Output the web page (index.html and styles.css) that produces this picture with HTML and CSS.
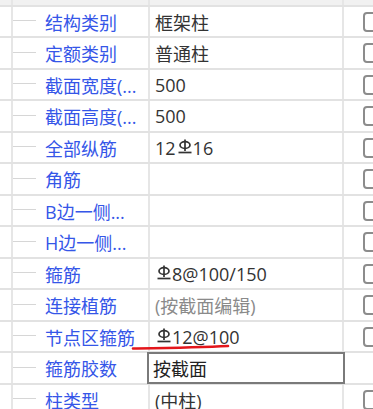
FILE: index.html
```html
<!DOCTYPE html>
<html>
<head>
<meta charset="utf-8">
<link rel="stylesheet" href="styles.css">
</head>
<body>
<div class="grid">
  <div class="strip"><div></div><div class="c1"></div><div class="c2"></div><div class="c3"></div></div>
  <div class="row odd"><div></div><div class="c1"><span class="branch"></span><span class="label">结构类别</span></div><div class="c2">框架柱</div><div class="c3"><span class="cb"></span></div></div>
  <div class="row even"><div></div><div class="c1"><span class="branch"></span><span class="label">定额类别</span></div><div class="c2">普通柱</div><div class="c3"><span class="cb"></span></div></div>
  <div class="row odd"><div></div><div class="c1"><span class="branch"></span><span class="label">截面宽度(...</span></div><div class="c2">500</div><div class="c3"><span class="cb"></span></div></div>
  <div class="row even"><div></div><div class="c1"><span class="branch"></span><span class="label">截面高度(...</span></div><div class="c2">500</div><div class="c3"><span class="cb"></span></div></div>
  <div class="row odd"><div></div><div class="c1"><span class="branch"></span><span class="label">全部纵筋</span></div><div class="c2">12<svg class="rb" viewBox="0 0 14 16"><path d="M7 0.5V12"/><ellipse cx="7" cy="6" rx="5" ry="3.4"/><path d="M0.5 13.5H13.5"/></svg>16</div><div class="c3"><span class="cb"></span></div></div>
  <div class="row even"><div></div><div class="c1"><span class="branch"></span><span class="label">角筋</span></div><div class="c2"></div><div class="c3"><span class="cb"></span></div></div>
  <div class="row odd"><div></div><div class="c1"><span class="branch"></span><span class="label">B边一侧...</span></div><div class="c2"></div><div class="c3"><span class="cb"></span></div></div>
  <div class="row even"><div></div><div class="c1"><span class="branch"></span><span class="label">H边一侧...</span></div><div class="c2"></div><div class="c3"><span class="cb"></span></div></div>
  <div class="row odd"><div></div><div class="c1"><span class="branch"></span><span class="label">箍筋</span></div><div class="c2"><svg class="rb" viewBox="0 0 14 16"><path d="M7 0.5V12"/><ellipse cx="7" cy="6" rx="5" ry="3.4"/><path d="M0.5 13.5H13.5"/></svg>8@100/150</div><div class="c3"><span class="cb"></span></div></div>
  <div class="row even"><div></div><div class="c1"><span class="branch"></span><span class="label">连接植筋</span></div><div class="c2 muted">(按截面编辑)</div><div class="c3"><span class="cb"></span></div></div>
  <div class="row odd"><div></div><div class="c1"><span class="branch"></span><span class="label">节点区箍筋</span></div><div class="c2"><svg class="rb" viewBox="0 0 14 16"><path d="M7 0.5V12"/><ellipse cx="7" cy="6" rx="5" ry="3.4"/><path d="M0.5 13.5H13.5"/></svg>12@100</div><div class="c3"><span class="cb"></span></div></div>
  <div class="row even"><div></div><div class="c1"><span class="branch"></span><span class="label">箍筋胶数</span></div><div class="c2 editing"><div class="editor">按截面</div></div><div class="c3"></div></div>
  <div class="row odd"><div></div><div class="c1"><span class="branch"></span><span class="label">柱类型</span></div><div class="c2">(中柱)</div><div class="c3"><span class="cb"></span></div></div>
</div>
<svg class="mark" width="373" height="409" viewBox="0 0 373 409"><path d="M133 348.5 C165 348, 200 347.5, 228 346"/></svg>
</body>
</html>
```
FILE: styles.css
```css
html, body {
  margin: 0;
  padding: 0;
  background: #fff;
  overflow: hidden;
}
body {
  width: 373px;
  height: 409px;
  position: relative;
  font-family: "Open Sans", "Noto Sans CJK SC", sans-serif;
  font-size: 18px;
  color: #333;
}
.grid {
  display: flex;
  flex-direction: column;
}
.strip, .row {
  display: grid;
  grid-template-columns: 11px 137px 194px 1fr;
}
.strip {
  height: 5px;
  background: #f1f1f1;
}
.row {
  border-top: 2px solid #e2e2e2;
  box-sizing: border-box;
}
.row.odd { height: 31px; }
.row.even { height: 32px; }
.c1, .c2, .c3 {
  border-left: 2px solid #e6e6e6;
  display: flex;
  align-items: center;
  white-space: nowrap;
  overflow: hidden;
}
.branch {
  width: 23px;
  height: 1px;
  background: #d6d6d6;
  margin-right: 9px;
  margin-top: -2px;
  flex: none;
}
.label {
  color: #3556e8;
}
.c2 {
  padding-left: 5px;
}
.muted { color: #8a8a8a; }
.rb {
  width: 14px;
  height: 16px;
  margin: 0 1px 2px 2px;
  fill: none;
  stroke: #333;
  stroke-width: 1.7;
  flex: none;
}
.c3 { padding-left: 19px; }
.cb {
  width: 20px;
  height: 20px;
  box-sizing: border-box;
  border: 2px solid #8c8c8c;
  border-radius: 4px;
  flex: none;
}
.editing {
  position: relative;
  overflow: visible;
}
.editor {
  position: absolute;
  left: -3px;
  right: -3px;
  top: -1px;
  bottom: -1px;
  border: 2px solid #7a7a7a;
  background: #fff;
  display: flex;
  align-items: center;
  padding-left: 4px;
  color: #222;
  z-index: 2;
}
.mark {
  position: absolute;
  left: 0;
  top: 0;
  pointer-events: none;
}
.mark path {
  fill: none;
  stroke: #e3161b;
  stroke-width: 2.6;
  stroke-linecap: round;
}
```
